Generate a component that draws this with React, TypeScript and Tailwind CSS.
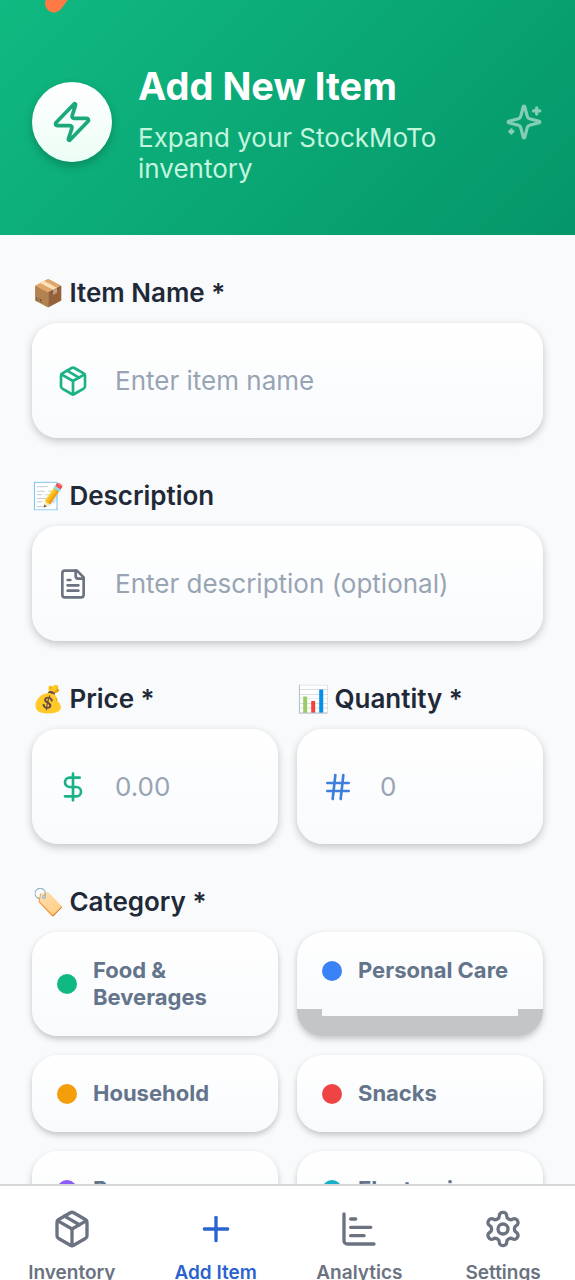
import { useState } from 'react';
import { DollarSign, Hash, Plus, Zap } from 'lucide-react';
import { clsx } from 'clsx';

const categories = [
  { name: 'Food & Beverages', dot: 'bg-[#10b981]' },
  { name: 'Personal Care', dot: 'bg-[#3b82f6]', strip: true },
  { name: 'Household', dot: 'bg-[#f59e0b]' },
  { name: 'Snacks', dot: 'bg-[#ef4444]' },
  { name: 'Beverages', dot: 'bg-[#8b5cf6]' },
  { name: 'Electronics', dot: 'bg-[#17aec6]' },
];

export default function App() {
  return (
    <div className="flex h-screen flex-col overflow-hidden bg-[#f9fafc] font-[Inter,'Noto_Color_Emoji',sans-serif]">
      <Header />

      <main className="min-h-0 flex-1 overflow-y-auto px-8 pt-[42px] [scrollbar-width:none]">
        <form className="flex flex-col gap-[42px]" onSubmit={(e) => e.preventDefault()}>
          <Field
            id="name"
            emoji="📦"
            label="Item Name *"
            placeholder="Enter item name"
            icon={<PackageIcon className="size-8 text-[#1bb286]" />}
          />
          <Field
            id="description"
            emoji="📝"
            label="Description"
            placeholder="Enter description (optional)"
            icon={<FileIcon className="size-8 text-[#6b7280]" />}
          />
          <div className="grid grid-cols-2 gap-[19px]">
            <Field
              id="price"
              emoji="💰"
              label="Price *"
              placeholder="0.00"
              icon={<DollarSign className="size-8 text-[#1bb286]" />}
            />
            <Field
              id="quantity"
              emoji="📊"
              label="Quantity *"
              placeholder="0"
              icon={<Hash className="size-8 text-[#3f7fdc]" />}
            />
          </div>
          <CategoryPicker />
        </form>
      </main>

      <BottomNav />
    </div>
  );
}

function Header() {
  return (
    <header className="relative shrink-0 bg-linear-135 from-[#10b981] to-[#059669] px-8 pt-[59px] pb-[51px]">
      {/* Accent stroke peeking in from the top edge */}
      <svg className="absolute top-0 left-10 h-4 w-8" viewBox="0 0 32 16" fill="none">
        <path d="M14 3.5 L27 -14" stroke="#ff7a45" strokeWidth="18" strokeLinecap="round" />
      </svg>
      <div className="flex items-center">
        <div className="flex size-20 shrink-0 items-center justify-center rounded-full bg-linear-to-b from-white to-[#ecfdf5] shadow-[0_4px_10px_rgba(0,0,0,0.22)]">
          <Zap className="size-11 text-[#1aa87c]" />
        </div>
        <div className="ml-[26px] flex-1">
          <h1 className="text-[38px] leading-[54px] font-bold text-white">Add New Item</h1>
          <p className="mt-[9px] text-[26px] leading-[31px] text-[#c3f5df]">
            Expand your StockMoTo inventory
          </p>
        </div>
        <SparklesIcon className="size-[38px] shrink-0 text-white opacity-50" />
      </div>
    </header>
  );
}

function FieldLabel({ emoji, children }: { emoji: string; children: React.ReactNode }) {
  return (
    <span className="flex items-center gap-[5px] text-[26px] leading-[31px] font-semibold text-[#1f2937]">
      <span>{emoji}</span>
      {children}
    </span>
  );
}

function Field({
  id,
  emoji,
  label,
  placeholder,
  icon,
}: {
  id: string;
  emoji: string;
  label: string;
  placeholder: string;
  icon: React.ReactNode;
}) {
  return (
    <div className="flex min-w-0 flex-col gap-[15px]">
      <label htmlFor={id}>
        <FieldLabel emoji={emoji}>{label}</FieldLabel>
      </label>
      <div className="flex items-center gap-[26px] rounded-[26px] bg-linear-to-b from-white to-[#f8fafc] px-[25px] py-[41px] shadow-[0_3px_8px_rgba(0,0,0,0.22)]">
        <span className="shrink-0">{icon}</span>
        <input
          id={id}
          type="text"
          placeholder={placeholder}
          className="w-full min-w-0 bg-transparent text-[26px] leading-[33px] text-[#1f2937] outline-none placeholder:text-[#98a4b3]"
        />
      </div>
    </div>
  );
}

function CategoryPicker() {
  const [selected, setSelected] = useState('');

  return (
    <fieldset className="pb-10">
      <legend className="mb-[15px]">
        <FieldLabel emoji="🏷️">Category *</FieldLabel>
      </legend>
      <div className="grid grid-cols-2 gap-[19px]">
        {categories.map(({ name, dot, strip }) => (
          <button
            key={name}
            type="button"
            aria-pressed={selected === name}
            onClick={() => setSelected(name)}
            className={clsx(
              'flex flex-col overflow-hidden rounded-[26px] text-left shadow-[0_3px_6px_rgba(0,0,0,0.22)]',
              strip ? 'bg-[#c4c5c7]' : 'justify-center bg-linear-to-b from-white to-[#f8fafc]'
            )}
          >
            <span
              className={clsx(
                'flex w-full items-center gap-4 px-[25px] py-[25px]',
                strip && 'bg-linear-to-b from-white to-[#f8fafc]'
              )}
            >
              <span className={clsx('size-5 shrink-0 rounded-full', dot)} />
              <span className="text-[22px] leading-[27px] font-bold text-[#64748b]">{name}</span>
            </span>
            {strip && <span className="mx-[25px] h-[7px] self-stretch bg-[#f8fafc]" />}
          </button>
        ))}
      </div>
    </fieldset>
  );
}

function BottomNav() {
  return (
    <nav className="grid h-24 shrink-0 grid-cols-4 overflow-hidden border-t-2 border-[#d6d7d9] bg-white pt-[23px]">
      <NavLink icon={<PackageIcon className="size-10" />} label="Inventory" />
      <NavLink icon={<Plus className="size-10" />} label="Add Item" active />
      <NavLink icon={<ChartIcon className="size-10" />} label="Analytics" />
      <NavLink icon={<GearIcon className="size-10" />} label="Settings" />
    </nav>
  );
}

function NavLink({ icon, label, active = false }: { icon: React.ReactNode; label: string; active?: boolean }) {
  return (
    <a
      href="#"
      className={clsx('flex flex-col items-center gap-3', active ? 'text-[#2b63cf]' : 'text-[#6b7280]')}
    >
      {icon}
      <span className="text-[19px] leading-6 font-semibold">{label}</span>
    </a>
  );
}

function Icon({ className, children }: { className?: string; children: React.ReactNode }) {
  return (
    <svg
      className={className}
      viewBox="0 0 24 24"
      fill="none"
      stroke="currentColor"
      strokeWidth="2"
      strokeLinecap="round"
      strokeLinejoin="round"
      aria-hidden="true"
    >
      {children}
    </svg>
  );
}

function PackageIcon({ className }: { className?: string }) {
  return (
    <Icon className={className}>
      <path d="m7.5 4.27 9 5.15" />
      <path d="M21 8a2 2 0 0 0-1-1.73l-7-4a2 2 0 0 0-2 0l-7 4A2 2 0 0 0 3 8v8a2 2 0 0 0 1 1.73l7 4a2 2 0 0 0 2 0l7-4A2 2 0 0 0 21 16Z" />
      <path d="m3.3 7 8.7 5 8.7-5" />
      <path d="M12 22V12" />
    </Icon>
  );
}

function FileIcon({ className }: { className?: string }) {
  return (
    <Icon className={className}>
      <path d="M15 2H6a2 2 0 0 0-2 2v16a2 2 0 0 0 2 2h12a2 2 0 0 0 2-2V7Z" />
      <path d="M14 2v4a2 2 0 0 0 2 2h4" />
      <path d="M10 9H8" />
      <path d="M16 13H8" />
      <path d="M16 17H8" />
    </Icon>
  );
}

function ChartIcon({ className }: { className?: string }) {
  return (
    <Icon className={className}>
      <path d="M3 3v16a2 2 0 0 0 2 2h16" />
      <path d="M7 16h8" />
      <path d="M7 11h12" />
      <path d="M7 6h3" />
    </Icon>
  );
}

function GearIcon({ className }: { className?: string }) {
  return (
    <Icon className={className}>
      <path d="M12.22 2h-.44a2 2 0 0 0-2 2v.18a2 2 0 0 1-1 1.73l-.43.25a2 2 0 0 1-2 0l-.15-.08a2 2 0 0 0-2.73.73l-.22.38a2 2 0 0 0 .73 2.73l.15.1a2 2 0 0 1 1 1.72v.51a2 2 0 0 1-1 1.74l-.15.09a2 2 0 0 0-.73 2.73l.22.38a2 2 0 0 0 2.73.73l.15-.08a2 2 0 0 1 2 0l.43.25a2 2 0 0 1 1 1.73V20a2 2 0 0 0 2 2h.44a2 2 0 0 0 2-2v-.18a2 2 0 0 1 1-1.73l.43-.25a2 2 0 0 1 2 0l.15.08a2 2 0 0 0 2.73-.73l.22-.39a2 2 0 0 0-.73-2.73l-.15-.08a2 2 0 0 1-1-1.74v-.5a2 2 0 0 1 1-1.74l.15-.09a2 2 0 0 0 .73-2.73l-.22-.38a2 2 0 0 0-2.73-.73l-.15.08a2 2 0 0 1-2 0l-.43-.25a2 2 0 0 1-1-1.73V4a2 2 0 0 0-2-2z" />
      <circle cx="12" cy="12" r="3" />
    </Icon>
  );
}

function SparklesIcon({ className }: { className?: string }) {
  return (
    <Icon className={className}>
      <path d="M9.937 15.5A2 2 0 0 0 8.5 14.063l-6.135-1.582a.5.5 0 0 1 0-.962L8.5 9.936A2 2 0 0 0 9.937 8.5l1.582-6.135a.5.5 0 0 1 .963 0L14.063 8.5A2 2 0 0 0 15.5 9.937l6.135 1.581a.5.5 0 0 1 0 .964L15.5 14.063a2 2 0 0 0-1.437 1.437l-1.582 6.135a.5.5 0 0 1-.963 0z" />
      <path d="M20 3v4" />
      <path d="M22 5h-4" />
      <path d="M4 17v2" />
      <path d="M5 18H3" />
    </Icon>
  );
}
